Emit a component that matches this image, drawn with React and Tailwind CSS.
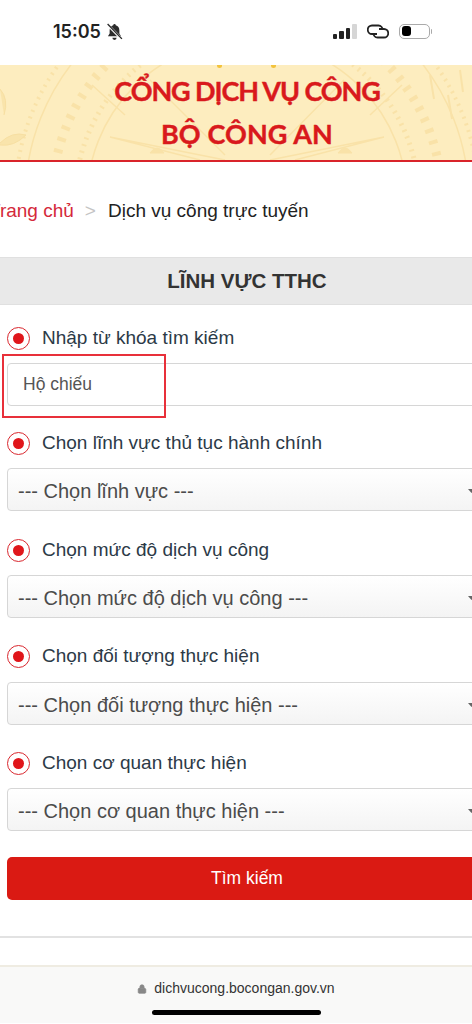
import React from 'react';
import { Lock } from 'lucide-react';

const sans = { fontFamily: '"Liberation Sans", Arial, sans-serif' };

const Radio = () => (
  <span className="flex h-[23px] w-[23px] shrink-0 items-center justify-center rounded-full border-[1.5px] border-[#d9272e] bg-white">
    <span className="h-[11px] w-[11px] rounded-full bg-[#e0161b]" />
  </span>
);

const Label = ({ children, className }) => (
  <div className={`flex h-6 items-center gap-[12px] pl-[7px] text-[19px] text-[#2c3a47] ${className}`}>
    <Radio />
    <span>{children}</span>
  </div>
);

const SelectBox = ({ text, className }) => (
  <div className={`ml-[7px] flex h-[43px] w-[480px] items-center justify-between rounded border border-[#d6d6d6] bg-gradient-to-b from-white to-[#f4f4f4] pl-[10px] pr-[11px] text-[20px] text-[#4b4b4b] ${className}`}>
    <span className="pt-[2px]">{text}</span>
    <svg className="mt-[2px]" width="7" height="4" viewBox="0 0 7 4" fill="#666"><path d="M0 0h7L3.5 4z" /></svg>
  </div>
);

const rows = [
  ['Chọn lĩnh vực thủ tục hành chính', '--- Chọn lĩnh vực ---', 'mt-[25px]', 'mt-[13px]'],
  ['Chọn mức độ dịch vụ công', '--- Chọn mức độ dịch vụ công ---', 'mt-[27px]', 'mt-[13px]'],
  ['Chọn đối tượng thực hiện', '--- Chọn đối tượng thực hiện ---', 'mt-[26px]', 'mt-[14px]'],
  ['Chọn cơ quan thực hiện', '--- Chọn cơ quan thực hiện ---', 'mt-[26px]', 'mt-[13px]'],
];

// faint bronze-drum pattern behind the banner title
const DrumPattern = () => (
  <svg className="absolute inset-0 h-full w-full" viewBox="0 0 472 95" fill="none" stroke="#f9e2a8" aria-hidden="true">
    <circle cx="247" cy="135" r="160" strokeWidth="1.5" />
    <circle cx="247" cy="135" r="172" strokeWidth="5" strokeDasharray="2 5" />
    <circle cx="247" cy="135" r="195" strokeWidth="9" strokeDasharray="4 8" />
    <circle cx="247" cy="135" r="222" strokeWidth="1.5" />
    <circle cx="247" cy="135" r="232" strokeWidth="4" strokeDasharray="2 5" />
    <path d="M110 72L225 95M110 72L200 95M384 72L270 95M384 72L295 95M150 15L225 90M344 15L270 90M92 20L125 50M402 20L370 50" strokeWidth="1.5" />
    <path d="M0 24Q9 34 4 50M0 78Q12 66 26 70Q14 82 0 80" stroke="#f7dfa2" fill="#f9e4ab" strokeWidth="1" />
    <path d="M150 88q7-10 14 0zM338 88q7-10 14 0z" fill="#f9e2a8" strokeWidth="1" />
    <path d="M430 10l4 24M448 30l4 24M460 5l3 22" strokeWidth="2" />
  </svg>
);

export default function App() {
  return (
    <div className="h-[1024px] w-[472px] overflow-hidden bg-white" style={sans}>
      {/* Status bar */}
      <div className="flex h-[65px] items-start justify-between pt-[21px] pl-[53px] pr-[40px]">
        <div className="flex items-center gap-[5px]">
          <span className="text-[18px] font-semibold leading-[22px] text-[#222]" style={{ fontFamily: 'Inter, sans-serif' }}>15:05</span>
          <svg width="17" height="18" viewBox="0 0 16 17" fill="#2b2b2b">
            <path d="M8 1a1.2 1.2 0 0 1 1.2 1.1C11.4 2.6 12.6 4.4 12.6 7v3l1.6 2.6H1.8L3.4 10V7C3.4 4.4 4.6 2.6 6.8 2.1A1.2 1.2 0 0 1 8 1z" />
            <path d="M6 14h4a2 2 0 0 1-4 0z" />
            <path d="M1.5 1.5L15 15.5" stroke="#fff" strokeWidth="2.6" />
            <path d="M1.5 1L15 15" stroke="#2b2b2b" strokeWidth="1.3" />
          </svg>
        </div>
        <div className="flex items-center pt-[2px]">
          <div className="flex h-[16px] items-end gap-[2px]">
            <span className="h-[5px] w-[4.5px] rounded-[1px] bg-[#222]" />
            <span className="h-[8px] w-[4.5px] rounded-[1px] bg-[#222]" />
            <span className="h-[11px] w-[4.5px] rounded-[1px] bg-[#222]" />
            <span className="h-[15px] w-[4.5px] rounded-[1px] bg-[#d6d6d6]" />
          </div>
          <svg className="ml-[10px]" width="22" height="15" viewBox="0 0 22 15" fill="none" stroke="#222" strokeWidth="1.8">
            <path d="M10 10H5A4 4 0 0 1 5 1.5h6.5C14 1.5 15.5 3.5 15.5 5.5" />
            <path d="M12 5h5a4 4 0 0 1 0 8.5h-6.5C8 13.500 6.500 11.500 6.500 9.500" />
          </svg>
          <div className="ml-[10px] flex items-center">
            <div className="flex h-[15px] w-[31px] items-center rounded-[5px] border border-[#aaa] p-[2px]">
              <span className="h-[10px] w-[9px] rounded-[3px] bg-black" />
            </div>
            <span className="ml-[1px] h-[5px] w-[1.5px] rounded-r bg-[#aaa]" />
          </div>
        </div>
      </div>

      {/* Banner */}
      <div className="relative h-[97px] overflow-hidden border-b-[2px] border-[#d9242a] bg-[#fdedbf]">
        <DrumPattern />
        <span className="absolute left-[217px] top-0 h-[3px] w-[5px] rounded-b-full bg-[#f3c33c]" />
        <span className="absolute left-[271px] top-0 h-[3px] w-[5px] rounded-b-full bg-[#f3c33c]" />
        <div className="relative flex h-full flex-col items-center pt-[4px] pl-[22px] text-[27px] font-bold leading-[43px] text-[#d9191c] [-webkit-text-stroke:0.4px_#d9191c]" style={{ fontFamily: 'Lato, sans-serif' }}>
          <div className="tracking-[-1.1px]">CỔNG DỊCH VỤ CÔNG</div>
          <div className="tracking-[0.1px]">BỘ CÔNG AN</div>
        </div>
      </div>

      {/* Breadcrumb */}
      <div className="mt-[37px] -ml-[11px] flex h-6 items-center text-[19px]">
        <span className="text-[#d4293a]">Trang chủ</span>
        <span className="ml-[11px] text-[#c4c4c4]">&gt;</span>
        <span className="ml-[12px] text-[#222]">Dịch vụ công trực tuyến</span>
      </div>

      {/* Section header */}
      <div className="mt-[34px] flex h-[48px] items-center justify-center border-y border-[#e0e0e0] bg-[#e9e9e9] pl-[22px] text-[20.5px] font-bold text-[#333]">
        LĨNH VỰC TTHC
      </div>

      {/* Form */}
      <div className="relative pt-[21px]">
        <Label>Nhập từ khóa tìm kiếm</Label>
        <div className="mt-[13px] ml-[7px] flex h-[43px] w-[480px] items-center rounded border border-[#d6d6d6] bg-white pl-[15px] text-[17.5px] text-[#555]">
          Hộ chiếu
        </div>
        {/* annotation box drawn over the input */}
        <div className="absolute left-[2px] top-[49px] h-[64px] w-[164px] border-[2px] border-[#e8303a]" />

        {rows.map(([label, value, labelGap, boxGap]) => (
          <div key={label}>
            <Label className={labelGap}>{label}</Label>
            <SelectBox text={value} className={boxGap} />
          </div>
        ))}

        <div className="mt-[26px] ml-[7px] flex h-[43px] w-[480px] items-center rounded-[5px] bg-[#da1a13] text-[17.5px] text-white">
          <span className="ml-[204px]">Tìm kiếm</span>
        </div>
      </div>

      <div className="mt-[36px] h-[2px] bg-[#e2e2e2]" />

      {/* Safari bottom bar */}
      <div className="mt-[27px] flex h-[58px] flex-col items-center border-t-[2px] border-[#efece2] bg-[#f9f9f8]">
        <div className="mt-[11px] flex items-center gap-[7px] text-[14px] text-[#333]">
          <Lock className="h-[10px] w-[10px] text-[#888]" fill="#888" strokeWidth={2} />
          <span>dichvucong.bocongan.gov.vn</span>
        </div>
        <div className="mt-[11px] h-[5px] w-[169px] rounded-full bg-black" />
      </div>
    </div>
  );
}
